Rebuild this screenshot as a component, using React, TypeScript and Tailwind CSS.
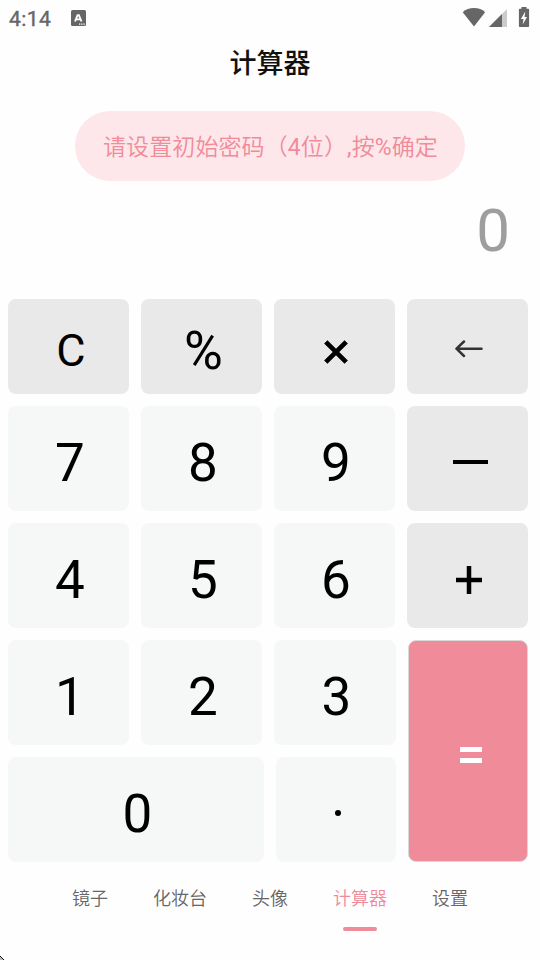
import type { ReactNode } from "react";

const light = "flex justify-center rounded-lg bg-[#f6f7f7]";
const gray = "flex justify-center rounded-lg bg-[#e9e9e9]";

function Digit({ value }: { value: string }) {
  return (
    <button className={`${light} h-[105px]`}>
      <span className="mt-[5px] ml-[3px] pt-[2px] text-[53px] leading-[100px]">{value}</span>
    </button>
  );
}

function GrayKey({ children }: { children: ReactNode }) {
  return <button className={gray}>{children}</button>;
}

function StatusBar() {
  return (
    <div className="flex h-[38px] items-start text-[#666]">
      <span className="ml-[9px] w-[62px] pt-[7px] text-[21px] leading-6 tracking-[0.4px] [-webkit-text-stroke:0.4px_#666]">4:14</span>
      <svg width="15" height="16" viewBox="0 0 15 16" className="mt-[10px]">
        <rect width="15" height="16" rx="1.5" fill="#666" />
        <path d="M4 11.500 L6.600 5.200H7.900L10.500 11.500 M5.200 9.400H9.300" fill="none" stroke="#fff" strokeWidth="1.900" />
        <path d="M8 14.200h1.300M10.200 14.200h1.300M12.400 14.200h1.300" stroke="#fff" strokeWidth="1.300" />
      </svg>
      <svg width="70" height="24" viewBox="0 0 70 24" className="mt-[5px] mr-[9px] ml-auto" fill="#666">
        <path d="M1.700 7.200C4.800 4.400 8.600 3 13 3s8.200 1.400 11.100 4.200L13 21.600z" />
        <path d="M28 22 46 4V22z" fill="#cbcbcb" />
        <path d="M28 22 41 9V22z" />
        <path d="M60.500 2h5v1.700h1.700q.9 0 .9.900v16.500q0 .9-.9.900h-8.400q-.9 0-.9-.9V4.600q0-.9.9-.9h1.700z" />
        <path d="M64.300 6.500 59.900 14h2.600l-.8 5.500 4.300-7.600h-2.500z" fill="#fff" />
      </svg>
    </div>
  );
}

const tabs = ["镜子", "化妆台", "头像", "计算器", "设置"];

export default function App() {
  return (
    <div className="relative flex h-[960px] w-[540px] flex-col overflow-hidden bg-[#fefefe] font-[Roboto,'Noto_Sans_CJK_SC',sans-serif] text-black">
      <StatusBar />
      <h1 className="h-[73px] pt-[2px] text-center text-[27px] leading-[49px] font-medium text-[#111]">计算器</h1>
      <div className="mx-[75px] flex h-[70px] items-center justify-center rounded-full bg-[#fde7ea] pt-[4px] pl-[1px] text-[23px] font-[350] tracking-[0.1px] whitespace-nowrap text-[#f08b99]">
        <p>
          请设置初始密码（<span className="font-normal">4</span>位）<span className="font-normal">,</span>按
          <span className="font-normal">%</span>确定
        </p>
      </div>
      <div className="h-[118px] pt-[14px] pr-[30px] text-right text-[60px] leading-[71px] text-[#9e9e9e]">0</div>

      <div className="flex flex-col gap-3 px-2">
        <div className="grid h-[95px] grid-cols-[repeat(4,121px)] grid-rows-[95px] gap-3">
          <GrayKey>
            <span className="mt-[4px] ml-[5px] text-[45px] leading-[95px]">C</span>
          </GrayKey>
          <GrayKey>
            <span className="mt-[5px] ml-[4px] text-[53px] leading-[95px]">%</span>
          </GrayKey>
          <GrayKey>
            <svg width="24" height="24" viewBox="0 0 24 24" className="mt-[41px] ml-[3px]" stroke="#000" strokeWidth="4.700">
              <path d="M1.800 1.800 22.200 22.200M22.200 1.800 1.800 22.200" />
            </svg>
          </GrayKey>
          <GrayKey>
            <svg width="28" height="18" viewBox="0 0 28 18" className="mt-[41px] ml-[3px]" fill="none" stroke="#333" strokeWidth="2.500" strokeLinecap="round" strokeLinejoin="round">
              <path d="M26.500 8.700H1.500M9 1.500 1.500 8.700 9 16" />
            </svg>
          </GrayKey>
        </div>
        <div className="grid grid-cols-[repeat(4,121px)] gap-3">
          <Digit value="7" />
          <Digit value="8" />
          <Digit value="9" />
          <GrayKey>
            <span className="mt-[54px] ml-[6px] h-[4px] w-[35px] bg-black" />
          </GrayKey>
          <Digit value="4" />
          <Digit value="5" />
          <Digit value="6" />
          <GrayKey>
            <svg width="26" height="28" viewBox="0 0 26 28" className="mt-[43px] ml-[3px]" stroke="#000" strokeWidth="4.500">
              <path d="M0 14H26M13 0V28" />
            </svg>
          </GrayKey>
        </div>
        <div className="flex gap-3">
          <div className="flex w-[388px] flex-col gap-3">
            <div className="grid grid-cols-[121px_121px_122px] gap-3">
              <Digit value="1" />
              <Digit value="2" />
              <Digit value="3" />
            </div>
            <div className="grid grid-cols-[256px_120px] gap-3">
              <Digit value="0" />
              <button className={`${light} h-[105px]`}>
                <span className="mt-[53px] ml-[4px] size-[6px] rounded-full bg-black" />
              </button>
            </div>
          </div>
          <button className="flex h-[222px] w-[120px] flex-col items-center gap-[6px] rounded-lg border border-[#d9d9d9] bg-[#f08b99] pt-[106px] pl-[6px]">
            <span className="h-[5px] w-[22px] bg-white" />
            <span className="h-[5px] w-[22px] bg-white" />
          </button>
        </div>
      </div>

      <nav className="flex gap-[45px] pt-[23px] pl-[72px] text-[18px] leading-7 font-[350] text-[#666]">
        {tabs.map((tab) =>
          tab === "计算器" ? (
            <div key={tab} className="flex flex-col items-center text-[#f08b99]">
              {tab}
              <span className="mt-[14px] h-[4px] w-[34px] rounded-full bg-[#f08b99]" />
            </div>
          ) : (
            <div key={tab}>{tab}</div>
          ),
        )}
      </nav>
      <svg width="5" height="5" viewBox="0 0 5 5" className="absolute bottom-0 left-0" shapeRendering="crispEdges">
        <path d="M0 1h1v1h1v1h1v1h1v1H0z" fill="#bbb" />
        <path d="M0 1h1v1H0zM1 2h1v1H1zM2 3h1v1H2zM3 4h1v1H3z" fill="#111" />
      </svg>
    </div>
  );
}
